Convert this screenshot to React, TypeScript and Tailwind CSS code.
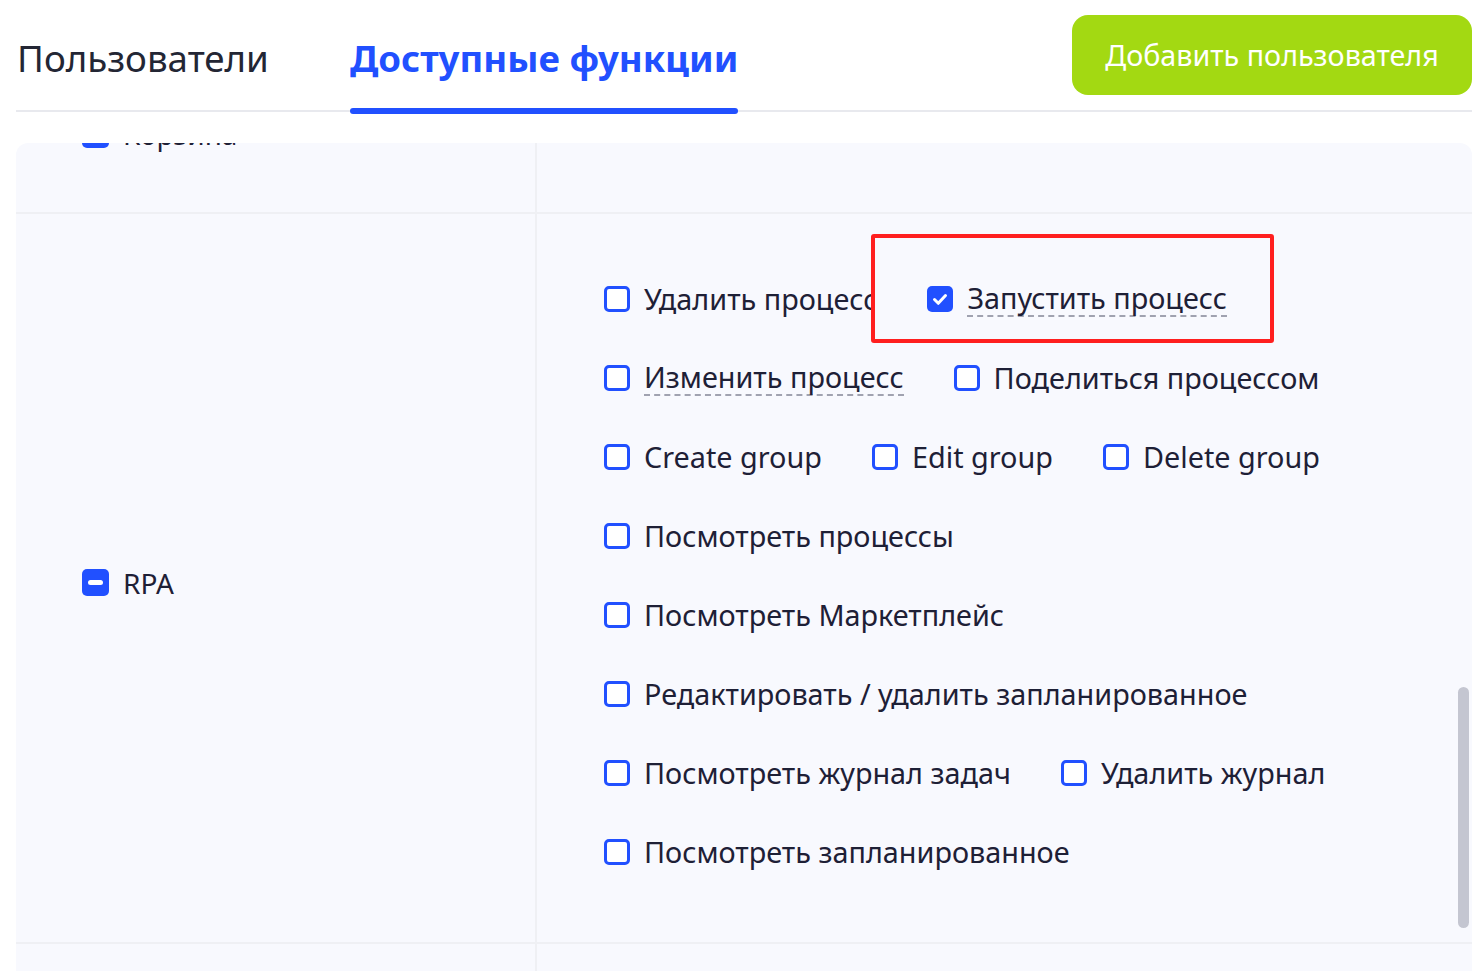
import { ReactNode } from "react"

type Item = { label: string; checked?: boolean; dashed?: boolean; marked?: boolean }

const rows: Array<Array<Item>> = [
  [{ label: "Удалить процесс" }, { label: "Запустить процесс", checked: true, dashed: true, marked: true }],
  [{ label: "Изменить процесс", dashed: true }, { label: "Поделиться процессом" }],
  [{ label: "Create group" }, { label: "Edit group" }, { label: "Delete group" }],
  [{ label: "Посмотреть процессы" }],
  [{ label: "Посмотреть Маркетплейс" }],
  [{ label: "Редактировать / удалить запланированное" }],
  [{ label: "Посмотреть журнал задач" }, { label: "Удалить журнал" }],
  [{ label: "Посмотреть запланированное" }],
]

const Box = ({ checked }: { checked?: boolean }) =>
  checked ? (
    <span className="w-[26px] h-[26px] rounded-[5px] bg-[#2150ff] flex items-center justify-center shrink-0">
      <svg width="20" height="20" viewBox="0 0 20 20" fill="none">
        <path d="M4.5 10.5l3.8 3.8L15.5 6.5" stroke="white" strokeWidth="3" strokeLinecap="round" strokeLinejoin="round" />
      </svg>
    </span>
  ) : (
    <span className="w-[26px] h-[26px] rounded-[5px] border-[3px] border-[#2150ff] bg-white shrink-0" />
  )

const Minus = () => (
  <span className="w-[27px] h-[27px] rounded-[5px] bg-[#2150ff] flex items-center justify-center shrink-0">
    <span className="w-[15px] h-[5px] rounded-full bg-white" />
  </span>
)

const Check = ({ item }: { item: Item }) => {
  const content: ReactNode = (
    <span className="relative flex items-center gap-[14px] h-[40px]">
      <Box checked={item.checked} />
      <span
        className={`text-[28.8px] leading-[34px] text-[#1e2036] whitespace-nowrap ${
          item.dashed ? "border-b-2 border-dashed border-[#a0a2b0]" : ""
        }`}
      >
        {item.label}
      </span>
    </span>
  )

  return (
    <div className="relative mr-[50px]">
      {item.marked && (
        <div className="absolute left-[-56px] top-[-45px] w-[403px] h-[109px] border-4 border-[#ff1f1f] rounded-[3px] bg-[#f8f9fe]" />
      )}
      {content}
    </div>
  )
}

export default function App() {
  return (
    <div className="min-h-screen bg-white pl-4 pr-[11px]" style={{ fontFamily: "'Noto Sans', 'Liberation Sans', sans-serif" }}>
      <div className="flex justify-between h-[112px] border-b-2 border-[#e8e9ee]">
        <div className="flex gap-[81px] pl-[1px]">
          <div className="flex flex-col">
            <div className="mt-[34px] text-[36.7px] leading-[48px] text-[#232634]">Пользователи</div>
          </div>
          <div className="flex flex-col">
            <div className="mt-[34px] text-[36.6px] leading-[48px] font-bold text-[#2150ff]">Доступные функции</div>
            <div className="mt-[26px] h-[6px] shrink-0 rounded-full bg-[#2150ff]" />
          </div>
        </div>
        <button className="mt-[15px] h-[80px] w-[400px] rounded-[16px] bg-[#a3d912] text-white text-[28.7px] leading-none">
          Добавить пользователя
        </button>
      </div>

      <div className="mt-[31px] relative h-[828px] overflow-hidden rounded-t-[12px] bg-[#f8f9fe]">
        <div className="-mt-[87px]">
          <div className="flex h-[158px] border-b-2 border-[#eff0f4]">
            <div className="w-[521px] border-r-2 border-[#eff0f4] flex items-center gap-[14px] pl-[66px]">
              <Minus />
              <span className="text-[28px] text-[#1e2036]">Корзина</span>
            </div>
            <div className="flex-1" />
          </div>

          <div className="flex h-[730px] border-b-2 border-[#eff0f4]">
            <div className="w-[521px] border-r-2 border-[#eff0f4] flex items-center gap-[14px] pl-[66px] pt-[9px]">
              <Minus />
              <span className="text-[28px] text-[#1e2036]">RPA</span>
            </div>
            <div className="flex-1 pl-[67px] pt-[65px] flex flex-col gap-[39px]">
              {rows.map((line, i) => (
                <div key={i} className="flex items-center">
                  {line.map((item) => (
                    <Check key={item.label} item={item} />
                  ))}
                </div>
              ))}
            </div>
          </div>

          <div className="flex h-[200px]">
            <div className="w-[521px] border-r-2 border-[#eff0f4]" />
            <div className="flex-1" />
          </div>
        </div>

        <div className="absolute right-[3px] top-[544px] w-[11px] h-[241px] rounded-full bg-[#c4c6d1]" />
      </div>
    </div>
  )
}
